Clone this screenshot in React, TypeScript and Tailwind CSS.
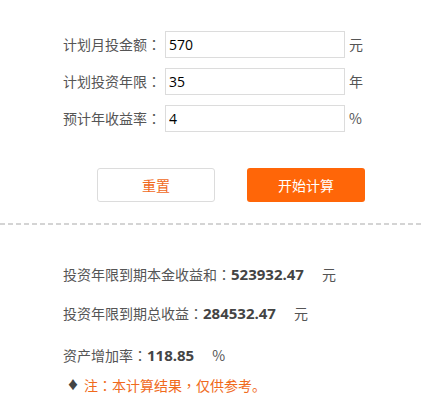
import React from "react";

const font = { fontFamily: '"Noto Sans CJK SC", sans-serif' };

function Colon() {
  return <span className="font-['Noto_Sans_CJK_TC',sans-serif]">：</span>;
}

function Row({ label, value, unit, first }: { label: string; value: string; unit: string; first?: boolean }) {
  return (
    <div className={`flex items-center h-[27px] ${first ? "" : "mt-[10px]"}`}>
      <div className="w-[102px] text-[14px] text-[#555] leading-[27px] whitespace-nowrap">
        {label}
        <Colon />
      </div>
      <input
        readOnly
        value={value}
        className="w-[180px] h-[27px] border border-[#dcdcdc] pl-[3px] text-[14px] font-normal text-black outline-none font-['Open_Sans',sans-serif]"
      />
      <div className="ml-[4px] text-[14px] text-[#555]">{unit}</div>
    </div>
  );
}

export default function App() {
  return (
    <div className="w-[423px] h-[402px] bg-white overflow-hidden" style={font}>
      <div className="pt-[31px] pl-[63px]">
        <Row first label="计划月投金额" value="570" unit="元" />
        <Row label="计划投资年限" value="35" unit="年" />
        <Row label="预计年收益率" value="4" unit="%" />
      </div>
      <div className="flex mt-[36px] pl-[97px] gap-[32px]">
        <button className="w-[118px] h-[34px] border border-[#dcdcdc] rounded-[3px] bg-white text-[#f06a1c] text-[14px]">
          重置
        </button>
        <button className="w-[118px] h-[34px] rounded-[3px] bg-[#ff6608] text-white text-[14px]">
          开始计算
        </button>
      </div>
      <div className="mt-[21px] h-[2px] w-full bg-[repeating-linear-gradient(to_right,#d4d4d4_0px,#d4d4d4_5px,transparent_5px,transparent_8px)]" />
      <div className="pl-[63px] text-[14px] text-[#555]">
        <div className="mt-[39px] h-[20px] leading-[20px] flex items-center">
          <span>投资年限到期本金收益和<Colon /></span>
          <span className="font-bold text-[15px] text-[#444] font-['Open_Sans','Noto_Sans_CJK_SC',sans-serif]">523932.47</span>
          <span className="ml-[18px]">元</span>
        </div>
        <div className="mt-[19px] h-[20px] leading-[20px] flex items-center">
          <span>投资年限到期总收益<Colon /></span>
          <span className="font-bold text-[15px] text-[#444] font-['Open_Sans','Noto_Sans_CJK_SC',sans-serif]">284532.47</span>
          <span className="ml-[18px]">元</span>
        </div>
        <div className="mt-[22px] h-[20px] leading-[20px] flex items-center">
          <span>资产增加率<Colon /></span>
          <span className="font-bold text-[15px] text-[#444] font-['Open_Sans','Noto_Sans_CJK_SC',sans-serif]">118.85</span>
          <span className="ml-[18px]">%</span>
        </div>
        <div className="mt-[10px] h-[20px] leading-[20px] flex items-center">
          <span className="ml-[4px] text-[#444] text-[12px]">♦</span>
          <span className="ml-[5px] text-[#f06a1c]">
            注<Colon />本计算结果<span className="font-['Noto_Sans_CJK_TC',sans-serif]">，</span>仅供参考。
          </span>
        </div>
      </div>
    </div>
  );
}
